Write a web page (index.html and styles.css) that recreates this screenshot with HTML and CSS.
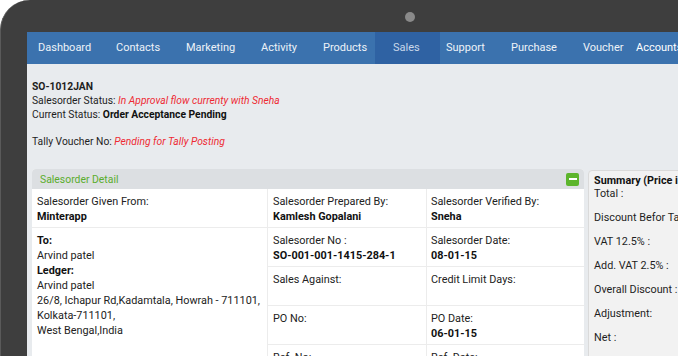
FILE: index.html
```html
<!DOCTYPE html>
<html lang="en">
<head>
<meta charset="utf-8">
<title>Salesorder</title>
<link rel="stylesheet" href="styles.css">
</head>
<body>
<div class="device">
  <span class="camera"></span>
  <div class="screen">
    <nav class="nav">
      <a class="nav-item w-dash">Dashboard</a>
      <a class="nav-item w-contacts">Contacts</a>
      <a class="nav-item w-marketing">Marketing</a>
      <a class="nav-item w-activity">Activity</a>
      <a class="nav-item w-products">Products</a>
      <a class="nav-item active">Sales</a>
      <a class="nav-item w-support">Support</a>
      <a class="nav-item w-purchase">Purchase</a>
      <a class="nav-item w-voucher">Voucher</a>
      <a class="nav-item accounts">Accounts</a>
    </nav>
    <main class="content">
      <div class="info">
        <p class="code">SO-1012JAN</p>
        <p>Salesorder Status: <em class="alert">In Approval flow currenty with Sneha</em></p>
        <p>Current Status: <b>Order Acceptance Pending</b></p>
        <p class="tally">Tally Voucher No: <em class="alert">Pending for Tally Posting</em></p>
      </div>
      <div class="row">
        <section class="panel">
          <header class="panel-head">
            <span class="panel-title">Salesorder Detail</span>
            <span class="collapse"><span class="bar"></span></span>
          </header>
          <div class="grid">
            <div class="cell">Salesorder Given From:<b class="v">Minterapp</b></div>
            <div class="cell">Salesorder Prepared By:<b class="v">Kamlesh Gopalani</b></div>
            <div class="cell last">Salesorder Verified By:<b class="v">Sneha</b></div>
            <div class="cell party">
              <b class="v">To:</b>
              <span class="l">Arvind patel</span>
              <b class="v">Ledger:</b>
              <span class="l">Arvind patel</span>
              <span class="l">26/8, Ichapur Rd,Kadamtala, Howrah - 711101,</span>
              <span class="l">Kolkata-711101,</span>
              <span class="l">West Bengal,India</span>
            </div>
            <div class="cell">Salesorder No :<b class="v">SO-001-001-1415-284-1</b></div>
            <div class="cell last">Salesorder Date:<b class="v">08-01-15</b></div>
            <div class="cell">Sales Against:</div>
            <div class="cell last">Credit Limit Days:</div>
            <div class="cell">PO No:</div>
            <div class="cell last">PO Date:<b class="v">06-01-15</b></div>
            <div class="cell">Ref. No:</div>
            <div class="cell last">Ref. Date:</div>
          </div>
        </section>
        <aside class="summary">
          <div class="sum-title">Summary (Price in INR)</div>
          <div class="sum-row">Total :</div>
          <div class="sum-row">Discount Befor Tax :</div>
          <div class="sum-row">VAT 12.5% :</div>
          <div class="sum-row">Add. VAT 2.5% :</div>
          <div class="sum-row">Overall Discount :</div>
          <div class="sum-row">Adjustment:</div>
          <div class="sum-row">Net :</div>
        </aside>
      </div>
    </main>
  </div>
</div>
</body>
</html>
```
FILE: styles.css
```css
html, body {
  margin: 0;
  padding: 0;
  background: #ffffff;
  overflow: hidden;
}
body {
  font-family: Roboto, "Noto Sans", "Liberation Sans", sans-serif;
  color: #222;
}
.device {
  position: relative;
  width: 678px;
  height: 356px;
  box-sizing: border-box;
  padding: 32px 0 0 27px;
  background: #3e3e3e;
  border-radius: 30px 0 0 0;
  border-left: 1px solid #5a5a5a;
  overflow: hidden;
}
.camera {
  position: absolute;
  left: 404px;
  top: 12px;
  width: 10px;
  height: 10px;
  border-radius: 50%;
  background: #8a8a8a;
}
.screen {
  height: 100%;
  width: 700px;
  background: #e8ebee;
  overflow: hidden;
  margin-left: -1px;
}
.nav {
  display: flex;
  height: 32px;
  padding-left: 11px;
  background: #3b72ae;
  white-space: nowrap;
}
.nav-item {
  flex: none;
  box-sizing: border-box;
  line-height: 32px;
  font-size: 11px;
  color: #edf2f8;
}
.w-dash { width: 78px; }
.w-contacts { width: 70px; }
.w-marketing { width: 75px; }
.w-activity { width: 62px; }
.w-products { width: 70px; }
.active {
  width: 65px;
  margin-left: -18px;
  padding-left: 18px;
  background: #2f62a3;
  color: #c9d8ea;
}
.w-support { width: 65px; margin-left: 6px; }
.w-purchase { width: 72px; }
.w-voucher { width: 53px; }
.accounts {
  font-size: 11px;
  color: #ffffff;
}
.content {
  padding: 16px 0 0 5px;
}
.info p {
  margin: 0;
  font-size: 10.3px;
  line-height: 14px;
  color: #1e1e1e;
}
.info .code {
  font-weight: 700;
}
.info b {
  font-weight: 700;
  color: #111;
}
.info .tally {
  margin-top: 13px;
}
.alert {
  color: #ee2a33;
}
.row {
  display: flex;
  align-items: flex-start;
  margin-top: 20px;
}
.panel {
  flex: none;
  width: 552px;
  background: #ffffff;
  border-radius: 4px 4px 0 0;
  overflow: hidden;
}
.panel-head {
  display: flex;
  align-items: center;
  justify-content: space-between;
  height: 20px;
  padding: 0 5px 0 8px;
  background: #dcdfe2;
}
.panel-title {
  font-size: 10.4px;
  color: #5aad2c;
  padding-top: 1px;
}
.collapse {
  display: flex;
  align-items: center;
  justify-content: center;
  width: 13px;
  height: 13px;
  border-radius: 2px;
  background: #5cb52c;
}
.bar {
  width: 8px;
  height: 2px;
  background: #ffffff;
}
.grid {
  display: grid;
  grid-template-columns: 236px 159px 157px;
  grid-auto-rows: 39px;
}
.cell {
  box-sizing: border-box;
  padding: 5px 4px 0 5px;
  font-size: 10.85px;
  line-height: 15px;
  color: #222;
  border-right: 1px solid #ececec;
  border-bottom: 1px solid #ececec;
  white-space: nowrap;
}
.cell.last {
  border-right: none;
  padding-left: 4px;
}
.cell .v {
  display: block;
  font-weight: 700;
  color: #111;
}
.cell .l {
  display: block;
}
.party {
  grid-row: span 5;
  border-bottom: none;
}
.summary {
  flex: none;
  width: 140px;
  height: 200px;
  margin: 1px 0 0 4px;
  padding: 3px 0 0 5px;
  box-sizing: border-box;
  background: #f2f2f2;
  border: 1px solid #dadada;
  border-radius: 4px 0 0 0;
  font-size: 10.8px;
  white-space: nowrap;
  color: #1e1e1e;
}
.sum-title {
  font-weight: 700;
  line-height: 13px;
  color: #111;
}
.sum-row {
  height: 24px;
  line-height: 14px;
}
```
